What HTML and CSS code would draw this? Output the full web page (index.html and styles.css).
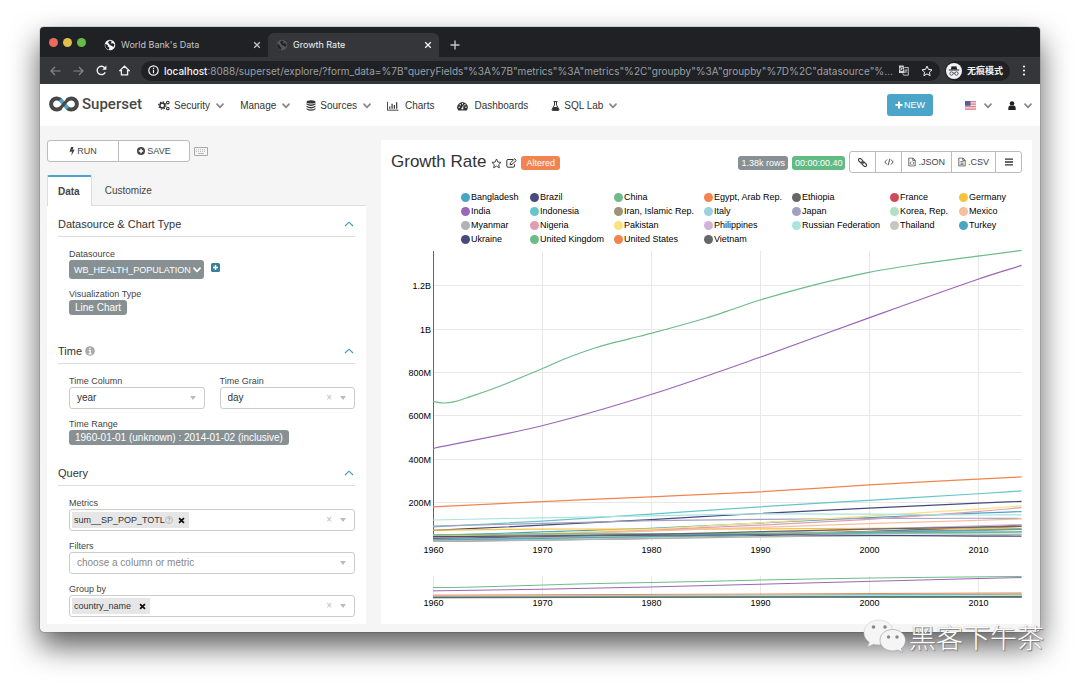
FILE: index.html
```html
<!DOCTYPE html>
<html lang="en">
<head>
<meta charset="utf-8">
<title>Growth Rate</title>
<link rel="stylesheet" href="styles.css">
</head>
<body>
<svg class="sprite" aria-hidden="true">
  <symbol id="chev" viewBox="0 0 8 6"><path d="M1 1.2 4 4.4 7 1.2" fill="none" stroke="currentColor" stroke-width="1.7" stroke-linecap="round" stroke-linejoin="round"/></symbol>
  <symbol id="up" viewBox="0 0 10 6"><path d="M1 5 5 1.2 9 5" fill="none" stroke="currentColor" stroke-width="1.1"/></symbol>
  <symbol id="x" viewBox="0 0 8 8"><path d="M1.2 1.2 6.8 6.8M6.8 1.2 1.2 6.8" fill="none" stroke="currentColor" stroke-width="1.3"/></symbol>
  <symbol id="xb" viewBox="0 0 8 8"><path d="M1.2 1.2 6.8 6.8M6.8 1.2 1.2 6.8" fill="none" stroke="currentColor" stroke-width="2"/></symbol>
  <symbol id="globe" viewBox="0 0 12 12"><circle cx="6" cy="6" r="5.3" fill="currentColor"/><path d="M1.2 4.8 4 6.2 3.6 7.6 5.4 8.4 5 10.8 3 10 1.4 8ZM6 1.6 7.6 2.6 6.8 4.4 9 4.2 10.6 5.6 9.4 8 7.6 6.8 5.8 6 5 4.4 3.8 3.6Z" fill="#202124"/></symbol>
  <symbol id="star" viewBox="0 0 12 12"><path d="M6 1.1 7.5 4.4 11 4.8 8.4 7.2 9.1 10.7 6 8.9 2.9 10.7 3.6 7.2 1 4.8 4.5 4.4Z" fill="none" stroke="currentColor" stroke-linejoin="round"/></symbol>
  <symbol id="file" viewBox="0 0 10 12"><path d="M1 1H6L9 4V11H1ZM6 1V4H9" fill="none" stroke="currentColor"/></symbol>
</svg>

<main class="window">
  <header class="tabstrip">
    <div class="lights"><i class="light red"></i><i class="light yellow"></i><i class="light green"></i></div>
    <div class="tab">
      <svg class="globe" aria-hidden="true"><use href="#globe"/></svg><span class="tab-name">World Bank's Data</span>
      <button class="bare" aria-label="Close World Bank's Data"><svg class="x"><use href="#x"/></svg></button>
    </div>
    <div class="tab current">
      <svg class="globe dim" aria-hidden="true"><use href="#globe"/></svg><span class="tab-name">Growth Rate</span>
      <button class="bare" aria-label="Close Growth Rate"><svg class="x"><use href="#x"/></svg></button>
    </div>
    <button class="bare add-tab" aria-label="New tab"><svg width="10" height="10" viewBox="0 0 10 10"><path d="M5 0.5V9.5M0.5 5H9.5" stroke="currentColor" stroke-width="1.4"/></svg></button>
  </header>

  <div class="toolbar">
    <div class="travel">
      <button class="bare faint" aria-label="Back"><svg width="11" height="10" viewBox="0 0 11 10"><path d="M5 1 1 5 5 9M1 5H10.5" fill="none" stroke="currentColor" stroke-width="1.2"/></svg></button>
      <button class="bare faint" aria-label="Forward"><svg width="11" height="10" viewBox="0 0 11 10"><path d="M6 1 10 5 6 9M10 5H.5" fill="none" stroke="currentColor" stroke-width="1.2"/></svg></button>
      <button class="bare" aria-label="Reload"><svg width="11" height="11" viewBox="0 0 11 11"><path d="M9.2 7.2A4.2 4.2 0 1 1 8.6 2.7" fill="none" stroke="currentColor" stroke-width="1.4"/><path d="M10.4.6V4.8H6.2Z" fill="currentColor"/></svg></button>
      <button class="bare" aria-label="Home"><svg width="11" height="11" viewBox="0 0 11 11"><path d="M.8 5.6 5.5 1.2 10.2 5.6H8.6V9.8H2.4V5.6Z" fill="none" stroke="currentColor" stroke-width="1.3"/></svg></button>
    </div>
    <div class="omnibox">
      <svg width="11" height="11" viewBox="0 0 11 11" aria-hidden="true"><circle cx="5.5" cy="5.5" r="4.7" fill="none" stroke="currentColor" stroke-width="1.2"/><path d="M5.5 4.8V8.2M5.5 2.7V3.9" stroke="currentColor" stroke-width="1.2"/></svg>
      <div class="address"><label class="host" for="url">localhost</label><input id="url" class="url" type="text" value=":8088/superset/explore/?form_data=%7B&quot;queryFields&quot;%3A%7B&quot;metrics&quot;%3A&quot;metrics&quot;%2C&quot;groupby&quot;%3A&quot;groupby&quot;%7D%2C&quot;datasource&quot;%3..."></div>
      <button class="bare" aria-label="Translate"><svg width="11" height="11" viewBox="0 0 11 11"><path d="M1 .5H5.6L6.8 8H1Z" fill="#d5d6d8"/><path d="M6.3 2.5H10.3V10.2H5.6L4.8 8.3" fill="none" stroke="#b8babd"/><path d="M4.9 3.1A1.6 1.6 0 1 0 5.2 4.4H3.8" fill="none" stroke="#202124" stroke-width=".9"/><path d="M6.8 5H9.8M8.3 4.2V5C8.2 6.4 7.6 7.3 6.8 8M7.3 5.8 9.4 8" fill="none" stroke="#b8babd" stroke-width=".8"/></svg></button>
      <button class="bare" aria-label="Bookmark"><svg width="12" height="12"><use href="#star"/></svg></button>
    </div>
    <div class="incognito">
      <svg width="16" height="16" viewBox="0 0 16 16" aria-hidden="true"><circle cx="8" cy="8" r="8" fill="#f1f3f4"/><path d="M4.8 6.2 5.6 3.2 7 3.6 8 3.3 9 3.6 10.4 3.2 11.2 6.2ZM2.8 6.6H13.2V7.4H2.8Z" fill="#202124"/><g fill="none" stroke="#202124" stroke-width=".7"><circle cx="5.5" cy="10.5" r="1.7"/><circle cx="10.5" cy="10.5" r="1.7"/><path d="M7.2 10.200Q8 9.700 8.800 10.200"/></g></svg>
      <span>无痕模式</span>
    </div>
    <button class="bare kebab" aria-label="Menu"><svg width="4" height="11" viewBox="0 0 4 11" fill="currentColor"><circle cx="2" cy="1.5" r="1.1"/><circle cx="2" cy="5.5" r="1.1"/><circle cx="2" cy="9.5" r="1.1"/></svg></button>
  </div>

  <nav class="nav">
    <a class="brand" href="#">
      <svg width="30" height="16" viewBox="0 0 30 16" aria-hidden="true"><g fill="none" stroke-width="4"><path d="M11.800 11.800A5.600 5.600 0 1 1 11.800 4.200" stroke="#484848"/><path d="M18.200 4.200A5.600 5.600 0 1 1 18.200 11.800" stroke="#484848"/><path d="M11.200 3.600 18.800 12.400" stroke="#4aa5c9"/><path d="M18.900 3.500 11.100 12.500" stroke="#484848" stroke-width="3.400"/></g></svg>
      <span>Superset</span>
    </a>
    <a class="item" href="#"><svg width="12" height="11" viewBox="0 0 12 11" aria-hidden="true"><g fill="none" stroke="#333"><circle cx="4.300" cy="5.500" r="2.400" stroke-width="1.500"/><circle cx="4.300" cy="5.500" r="3.600" stroke-width="1.200" stroke-dasharray="1.400 1.427"/><circle cx="9.800" cy="2.600" r="1.300" stroke-width="1.100"/><circle cx="9.800" cy="8.500" r="1.300" stroke-width="1.100"/></g></svg><span>Security</span><svg class="chev"><use href="#chev"/></svg></a>
    <a class="item" href="#"><span>Manage</span><svg class="chev"><use href="#chev"/></svg></a>
    <a class="item" href="#"><svg width="10" height="11" viewBox="0 0 10 11" fill="#333" aria-hidden="true"><ellipse cx="5" cy="1.900" rx="4.500" ry="1.700"/><path d="M.5 3.200Q5 5.800 9.500 3.200V4.600Q5 7.200.5 4.600ZM.5 5.700Q5 8.300 9.500 5.700V7.100Q5 9.700.5 7.100ZM.5 8.200Q5 10.800 9.500 8.200V9.200Q5 12.200.5 9.200Z"/></svg><span>Sources</span><svg class="chev"><use href="#chev"/></svg></a>
    <a class="item plain" href="#"><svg width="12" height="10" viewBox="0 0 13 10" aria-hidden="true"><path d="M.5.5V9.500H12.500" fill="none" stroke="#333"/><path d="M3 8V5.500M5.500 8V2.500M8 8V4M10.500 8V1" stroke="#333" stroke-width="1.300"/></svg><span>Charts</span></a>
    <a class="item plain" href="#"><svg width="11" height="10" viewBox="0 0 11 10" aria-hidden="true"><path d="M1.300 9.500A5.200 5.200 0 1 1 9.700 9.500Z" fill="#333"/><g fill="#fff"><circle cx="2.200" cy="6.200" r=".7"/><circle cx="3.200" cy="3.700" r=".7"/><circle cx="5.500" cy="2.700" r=".7"/><circle cx="7.900" cy="3.700" r=".7"/><circle cx="8.900" cy="6.200" r=".7"/><circle cx="5.400" cy="7.600" r="1"/></g><path d="M5.400 7.600 6.300 4.400" stroke="#fff" stroke-width=".8"/></svg><span>Dashboards</span></a>
    <a class="item" href="#"><svg width="9" height="10" viewBox="0 0 9 10" aria-hidden="true"><path d="M2.500.6H6.500M3.500.6V4L1 8.500Q.7 9.400 1.600 9.400H7.400Q8.300 9.400 8 8.500L5.500 4V.6" fill="none" stroke="#333"/><path d="M2.600 6H6.400L8 9H1Z" fill="#333"/></svg><span>SQL Lab</span><svg class="chev"><use href="#chev"/></svg></a>
    <button class="new"><svg width="8" height="8" viewBox="0 0 8 8" aria-hidden="true"><path d="M4 .5V7.500M.5 4H7.500" stroke="#fff" stroke-width="2"/></svg>NEW</button>
    <a class="item lang" href="#" aria-label="Language"><svg width="11" height="9" viewBox="0 0 11 9"><path fill="#f3dfe2" d="M0 0H11V9H0Z"/><path d="M0 .7H11M0 3.200H11M0 5.700H11M0 8.200H11" stroke="#dd808a" stroke-width="1.200"/><path fill="#5360a0" d="M0 0H5.500V4.800H0Z"/></svg><svg class="chev"><use href="#chev"/></svg></a>
    <a class="item user" href="#" aria-label="User"><svg width="8" height="9" viewBox="0 0 8 9" fill="#222"><circle cx="4" cy="2.500" r="2.300"/><path d="M.3 9V7Q.3 4.600 2.300 4.400Q4 5.800 5.700 4.400Q7.700 4.600 7.700 7V9Z"/></svg><svg class="chev"><use href="#chev"/></svg></a>
  </nav>

  <div class="workspace">
    <section class="controls">
      <div class="actions">
        <div class="group">
          <button><svg width="6" height="9" viewBox="0 0 6 9" aria-hidden="true"><path d="M2 0H4.600L3.600 2.800 5.800 2.400 2.300 9 3 4.600.5 5.100Z" fill="currentColor"/></svg>RUN</button>
          <button><svg width="8" height="8" viewBox="0 0 8 8" aria-hidden="true"><circle cx="4" cy="4" r="4" fill="currentColor"/><path d="M4 1.800V6.200M1.800 4H6.200" stroke="#fff" stroke-width="1.400"/></svg>SAVE</button>
        </div>
        <button class="bare" aria-label="Keyboard shortcuts"><svg width="14" height="9" viewBox="0 0 14 9"><path d="M.5.500H13.500V8.500H.5Z" fill="none" stroke="#aaa"/><path d="M2 2.700H12M2 4.500H12" stroke="#bbb" stroke-dasharray="1 1"/><path d="M4 6.500H10" stroke="#bbb"/></svg></button>
      </div>
      <div class="subtabs" role="tablist">
        <button class="subtab on" role="tab" aria-selected="true">Data</button>
        <button class="subtab" role="tab" aria-selected="false">Customize</button>
      </div>
      <div class="panel">
        <section class="block">
          <h2>Datasource &amp; Chart Type<svg class="up"><use href="#up"/></svg></h2>
          <div class="fields">
            <div class="field"><span class="label" id="l-ds">Datasource</span>
              <div class="row"><button class="chip tall" aria-describedby="l-ds">WB_HEALTH_POPULATION<svg class="chev"><use href="#chev"/></svg></button><button class="bare plus" aria-label="Expand datasource"><svg width="9" height="9" viewBox="0 0 9 9"><rect width="9" height="9" rx="1.500" fill="#3a809d"/><path d="M4.500 2V7M2 4.500H7" stroke="#fff" stroke-width="1.500"/></svg></button></div></div>
            <div class="field"><span class="label">Visualization Type</span><button class="chip">Line Chart</button></div>
          </div>
        </section>
        <section class="block second">
          <h2><span>Time <svg class="info" width="10" height="10" viewBox="0 0 10 10" aria-hidden="true"><circle cx="5" cy="5" r="4.800" fill="#aaa"/><path d="M5 1.700V3.100M3.800 4.400H5.200V7.600M3.600 7.800H6.600" fill="none" stroke="#fff" stroke-width="1.300"/></svg></span><svg class="up"><use href="#up"/></svg></h2>
          <div class="fields">
            <div class="pair">
              <div class="field"><label class="label" for="col">Time Column</label><div class="box"><select id="col"><option>year</option></select><i class="caret"></i></div></div>
              <div class="field"><label class="label" for="grain">Time Grain</label><div class="box"><select id="grain"><option>day</option></select><button class="bare clear" aria-label="Clear">×</button><i class="caret"></i></div></div>
            </div>
            <div class="field"><span class="label">Time Range</span><button class="chip">1960-01-01 (unknown) : 2014-01-02 (inclusive)</button></div>
          </div>
        </section>
        <section class="block">
          <h2>Query<svg class="up"><use href="#up"/></svg></h2>
          <div class="fields">
            <div class="field"><label class="label" for="metrics">Metrics</label><div class="box tags"><span class="tag">sum__SP_POP_TOTL<svg width="8" height="8" viewBox="0 0 8 8" aria-hidden="true"><circle cx="4" cy="4" r="3.500" fill="none" stroke="#aaa" stroke-width=".7"/><path d="M2.900 3.200Q3 2 4 2T5.100 3.100Q5.100 3.700 4 4.200V4.800M4 5.500V6.300" fill="none" stroke="#999" stroke-width=".8"/></svg><button class="bare drop" aria-label="Remove sum__SP_POP_TOTL"><svg class="cross"><use href="#xb"/></svg></button></span><input id="metrics" type="text"><button class="bare clear" aria-label="Clear">×</button><i class="caret"></i></div></div>
            <div class="field"><label class="label" for="filters">Filters</label><div class="box"><select id="filters" class="empty"><option>choose a column or metric</option></select><i class="caret"></i></div></div>
            <div class="field"><label class="label" for="group">Group by</label><div class="box tags"><span class="tag wide">country_name<button class="bare drop" aria-label="Remove country_name"><svg class="cross"><use href="#xb"/></svg></button></span><input id="group" type="text"><button class="bare clear" aria-label="Clear">×</button><i class="caret"></i></div></div>
          </div>
        </section>
      </div>
    </section>

    <section class="card">
      <div class="card-head">
        <h1>Growth Rate</h1>
        <button class="bare" aria-label="Favorite"><svg width="11" height="11"><use href="#star"/></svg></button>
        <button class="bare" aria-label="Edit"><svg width="11" height="10" viewBox="0 0 11 10"><path d="M7 1.500H2Q.8 1.500.8 2.700V8Q.8 9.200 2 9.200H7.300Q8.500 9.200 8.500 8V6.300" fill="none" stroke="currentColor"/><path d="M4 6.800 4.500 4.800 8.700.8 10.300 2.400 6 6.400Z" fill="none" stroke="currentColor"/></svg></button>
        <span class="altered">Altered</span>
        <span class="stat rows">1.38k rows</span>
        <span class="stat time">00:00:00.40</span>
        <div class="group">
          <button aria-label="Copy link"><svg width="9" height="9" viewBox="0 0 9 9"><g transform="rotate(45 4.500 4.500)" fill="none" stroke="currentColor" stroke-width="1.200"><rect x="-.6" y="3" width="5" height="3" rx="1.400"/><rect x="4.600" y="3" width="5" height="3" rx="1.400"/><path d="M3 4.500H6"/></g></svg></button>
          <button aria-label="Embed code"><svg width="10" height="8" viewBox="0 0 10 8"><path d="M3 1.500.8 4 3 6.500M7 1.500 9.200 4 7 6.500M5.800.8 4.200 7.200" fill="none" stroke="currentColor" stroke-width=".9"/></svg></button>
          <button><svg width="8" height="10" viewBox="0 0 10 12" aria-hidden="true"><use href="#file" width="10" height="12"/><path d="M4 5.500 2.800 7.500 4 9.500M6 5.500 7.200 7.500 6 9.500" fill="none" stroke="currentColor" stroke-width=".9"/></svg>.JSON</button>
          <button><svg width="8" height="10" viewBox="0 0 10 12" aria-hidden="true"><use href="#file" width="10" height="12"/><path d="M3 5.500H7M3 7.500H7M3 9.300H7" stroke="currentColor" stroke-width=".9"/></svg>.CSV</button>
          <button aria-label="More"><svg width="8" height="8" viewBox="0 0 8 8"><path d="M0 1.200H8M0 4H8M0 6.800H8" stroke="#333" stroke-width="1.300"/></svg></button>
        </div>
      </div>
      <ul class="legend" id="legend"></ul>
      <svg class="chart" id="chart" viewBox="0 0 631 370" role="img" aria-label="Population by country, 1960 to 2014"></svg>
    </section>
  </div>
</main>

<div class="watermark">
  <svg width="44" height="36" viewBox="0 0 44 36" aria-hidden="true"><g fill="#f5f5f5" stroke="#999" stroke-width=".6"><path stroke="#ccc" d="M16 1C7.500 1 1 6.500 1 13.400 1 17.400 3 20.800 6.500 23.200L5 27.500 10.500 25Q13 25.900 17 25.800L30 12Q28 1 16 1Z"/><path d="M29.500 10.500C22.500 10.500 17 15.300 17 21.200S22.500 32 29.500 32Q32.500 32 35 31L39.500 33.500 38.200 29.600C41 27.600 42.500 24.600 42.500 21.200 42.500 15.300 36.800 10.500 29.500 10.500Z"/></g><g fill="#888"><circle cx="10.500" cy="8" r="1.800"/><circle cx="22" cy="8" r="1.800"/><circle cx="25.500" cy="18" r="1.700"/><circle cx="34" cy="18" r="1.700"/></g></svg>
  <span>黑客下午茶</span>
</div>
<script src="chart.js"></script>
</body>
</html>
```
FILE: styles.css
```css
* { box-sizing: border-box; }
body {
  margin: 0;
  min-height: 100vh;
  padding: 27px 40px 53px;
  background: #fff;
  color: #333;
  font: 10px/12px "Liberation Sans", Arial, sans-serif;
  position: relative;
}
svg { display: block; flex: none; }
button, input, select { font: inherit; color: inherit; margin: 0; min-width: 0; }
.sprite { position: absolute; width: 0; height: 0; }
.bare { padding: 0; border: 0; background: none; display: flex; flex: none; }
a { color: inherit; text-decoration: none; }

.window {
  border-radius: 4px;
  overflow: hidden;
  background: #f5f5f5;
  box-shadow: 0 14px 30px rgba(0, 0, 0, .65), 0 0 1px #000;
}

/* browser chrome */
.tabstrip { display: flex; height: 30px; padding-top: 6px; background: #202124; color: #c3c5c8; font: 9px/12px Inter, "Noto Sans", sans-serif; }
.lights { display: flex; gap: 5px; padding: 5px 0 0 9px; width: 53px; }
.light { width: 9px; height: 9px; border-radius: 50%; }
.red { background: #ed6a5e; }
.yellow { background: #e0bf4b; }
.green { background: #68bb49; }
.tab { display: flex; align-items: center; width: 171px; padding: 0 7px 0 8px; border-radius: 6px 6px 0 0; }
.tab:not(.current) { margin-left: 3px; width: 172px; }
.current { background: #35363a; color: #f1f3f4; }
.tab-name { flex: 1; padding-left: 5px; }
.globe { width: 12px; height: 12px; color: #f1f3f4; }
.dim { color: #55575b; }
.x { width: 8px; height: 8px; }
.add-tab { align-items: center; padding-left: 11px; }

.toolbar { display: flex; align-items: center; height: 27px; padding: 0 14px 0 10px; background: #35363a; color: #f1f3f4; }
.travel { display: flex; gap: 12px; align-items: center; width: 91px; }
.faint { color: #85878b; }
.omnibox { display: flex; flex: 1; align-items: center; min-width: 0; height: 20px; padding: 0 7px; border-radius: 10px; background: #202124; gap: 12px; font: 10px/14px Inter, "Noto Sans", sans-serif; }
.address { display: flex; flex: 1; align-items: center; min-width: 0; margin: 0 -10px 0 -7px; }
.host { font-weight: 500; color: #f1f3f4; }
.url { flex: 1; width: 100%; padding: 0; border: 0; background: none; color: #9aa0a6; text-overflow: ellipsis; outline: 0; }
.incognito { display: flex; align-items: center; gap: 5px; height: 20px; margin-left: 5px; padding: 0 7px 0 1px; border-radius: 10px; background: #202124; font: 700 9px/14px "Noto Sans CJK SC", sans-serif; }
.kebab { margin-left: 12px; }

/* application navigation */
.nav { display: flex; align-items: center; height: 42px; padding: 0 8px 0 9px; background: #fff; }
.brand { display: flex; align-items: center; gap: 3px; width: 109px; padding-bottom: 3px; color: #484848; font: 500 15px/18px Roboto, sans-serif; }
.item { display: flex; align-items: center; gap: 4px; margin-right: 16px; padding-top: 1px; white-space: nowrap; }
.plain { gap: 6px; margin-right: 23px; }
.chev { width: 8px; height: 6px; color: #888; margin-left: 2px; }
.new { display: flex; align-items: center; gap: 1px; height: 22px; margin-left: auto; padding: 0 8px; border: 0; border-radius: 3px; background: #4aa5c9; color: #fff; font-size: 9px; }
.lang { margin: 0 16px 0 32px; gap: 6px; }
.user { margin: 0; gap: 6px; }

/* explore view */
.workspace { display: grid; grid-template-columns: minmax(0, 319fr) minmax(0, 651fr); gap: 15px; padding: 14px 8px 8px 7px; }
.actions { display: flex; align-items: center; gap: 4px; }
.group { display: flex; }
.group button { display: flex; align-items: center; justify-content: center; gap: 2px; height: 22px; padding: 0 6px; border: 1px solid #bbb; margin-left: -1px; background: #fff; color: #444; font-size: 9px; }
.group button:first-child { border-radius: 3px 0 0 3px; margin-left: 0; }
.group button:last-child { border-radius: 0 3px 3px 0; }
.actions .group button { width: 72px; }
.subtabs { display: flex; margin-top: 13px; height: 31px; border-bottom: 1px solid #ddd; }
.subtab { height: 31px; padding: 0 13px; border: 0; background: none; color: #444; }
.on { padding: 0 11px 0 10px; border: solid #ddd; border-width: 0 1px; border-top: 2px solid #4aa5c9; border-radius: 2px 2px 0 0; background: #fff; font-weight: 700; }
.panel { padding: 6px 11px 7px; background: #fff; }
.block + .block { margin-top: 16px; }
.block.second { margin-top: 24px; }
h2 { display: flex; align-items: center; justify-content: space-between; margin: 0 0 11px; height: 25px; border-bottom: 1px solid #ddd; font-size: 11px; line-height: 24px; font-weight: 400; }
.info { display: inline-block; vertical-align: -1px; }
.up { width: 10px; height: 6px; margin-right: 1px; color: #3a9bb5; }
.fields { display: grid; gap: 9px; padding-left: 11px; }
.label { display: block; font-size: 9px; line-height: 12px; color: #444; }
.row { display: flex; gap: 7px; align-items: center; }
.plus { padding-bottom: 4px; }
.chip { display: flex; align-items: center; height: 15px; padding: 0 6px; border: 0; border-radius: 3px; background: #879194; color: #fff; }
.tall { height: 19px; padding: 0 3px 0 5px; font-size: 9px; }
.tall .chev { color: #fff; }
.pair { display: grid; grid-template-columns: 1fr 1fr; gap: 15px; }
.box { display: flex; align-items: center; height: 22px; padding: 0 8px 0 7px; border: 1px solid #ccc; border-radius: 3px; background: #fff; }
.box select, .box input { flex: 1; width: 100%; padding: 0; border: 0; background: none; appearance: none; outline: 0; }
.box .empty { color: #888; }
.caret { border: 3px solid transparent; border-top: 4px solid #bbb; border-bottom: 0; }
.clear { padding-right: 8px; color: #bbb; }
.box.tags { padding-left: 2px; }
.tag { display: flex; align-items: center; flex: none; height: 16px; padding: 0 4px 0 2px; background: #e6e6e6; font-size: 9px; }
.drop { margin-left: 5px; }
.wide .drop { margin-left: 8px; }
.cross { width: 7px; height: 7px; color: #111; }

/* chart card */
.card { padding: 11px 10px 8px; background: #fff; }
.card-head { display: flex; align-items: center; height: 22px; gap: 4px; }
.card-head > .bare, .altered, .stat { margin-top: 2px; }
h1 { margin: 0 1px 0 0; font-size: 17px; line-height: 22px; font-weight: 400; white-space: nowrap; }
.altered, .stat { padding: 0 5px; border-radius: 3px; color: #fff; font-size: 9px; line-height: 14px; white-space: nowrap; }
.altered { background: #f2844f; }
.rows { margin-left: auto; background: #879194; }
.stat { padding: 0 3px; }
.time { background: #62bb85; }
.card-head .group button { min-width: 27px; }
.legend { display: grid; grid-template-columns: 69px 84px 90px 88px 98px 69px 63px; justify-content: end; margin: 17px 0 0; padding: 0; list-style: none; color: #000; font-size: 9px; line-height: 14px; white-space: nowrap; }
.legend li { display: flex; align-items: center; gap: 1px; }
.swatch { width: 9px; height: 9px; border-radius: 50%; }
.chart { width: 100%; height: auto; }
.chart text { font-size: 9px; fill: #000; }
.grid { stroke: #e8e8e8; fill: none; }
.axis { stroke: #666; fill: none; }
.series { fill: none; stroke-width: 1.2; }
.mini { stroke-width: 1; }

.watermark { position: absolute; right: 36px; bottom: 30px; display: flex; align-items: center; gap: 2px; color: #fff; font: 300 27px/34px "Noto Sans CJK SC", sans-serif; text-shadow: 1px 1px 1px #777, 0 0 1px #999; white-space: nowrap; }
```
FILE: chart.js
```js
// Population in millions at these years, unless a series gives its own [year, value] pairs.
const years = [1960, 1970, 1980, 1990, 2000, 2010, 2014];
const china = [[1960, 667], [1961, 660], [1962, 666], [1963, 682], [1966, 735], [1970, 818], [1972, 862], [1975, 916], [1978, 956], [1980, 981], [1985, 1051], [1987, 1084], [1990, 1135], [1995, 1205], [2000, 1263], [2005, 1304], [2010, 1338], [2014, 1364]];
const series = [
  ["Bangladesh", "#4aa5c4", [48, 65, 81, 106, 131, 152, 159]],
  ["Brazil", "#474a7c", [72, 96, 122, 150, 175, 198, 206]],
  ["China", "#6dbb8b", china],
  ["Egypt, Arab Rep.", "#f2844f", [27, 35, 43, 56, 68, 82, 90]],
  ["Ethiopia", "#666666", [22, 28, 35, 48, 66, 87, 97]],
  ["France", "#cc4b58", [47, 52, 55, 58, 61, 65, 66]],
  ["Germany", "#f8c33c", [73, 78, 78, 79, 82, 82, 81]],
  ["India", "#9b66b5", [450, 555, 699, 871, 1053, 1231, 1295]],
  ["Indonesia", "#66c5cb", [88, 115, 147, 181, 211, 241, 254]],
  ["Iran, Islamic Rep.", "#9c9379", [22, 29, 39, 56, 66, 74, 78]],
  ["Italy", "#9ccfe0", [50, 54, 56, 57, 57, 59, 61]],
  ["Japan", "#a39fc0", [92, 104, 117, 123, 127, 128, 127]],
  ["Korea, Rep.", "#b3dfc7", [25, 32, 38, 43, 47, 49, 50]],
  ["Mexico", "#f5bf9e", [38, 52, 69, 86, 103, 118, 125]],
  ["Myanmar", "#b2b2b2", [21, 27, 34, 42, 48, 52, 53]],
  ["Nigeria", "#e09eb4", [45, 56, 74, 96, 123, 159, 177]],
  ["Pakistan", "#fbe180", [45, 58, 78, 107, 138, 170, 185]],
  ["Philippines", "#cfb3d8", [26, 36, 47, 62, 78, 93, 99]],
  ["Russian Federation", "#aae3e0", [120, 130, 139, 148, 147, 143, 144]],
  ["Thailand", "#c9c6c2", [27, 37, 47, 57, 63, 67, 68]],
  ["Turkey", "#4aa5c4", [28, 35, 44, 54, 63, 72, 77]],
  ["Ukraine", "#474a7c", [43, 47, 50, 52, 49, 46, 45]],
  ["United Kingdom", "#6dbb8b", [52, 56, 56, 57, 59, 63, 65]],
  ["United States", "#f2844f", [181, 205, 227, 250, 282, 309, 319]],
  ["Vietnam", "#666666", [35, 43, 54, 66, 78, 87, 91]]
];

document.getElementById("legend").innerHTML = series
  .map(([name, color]) => `<li><i class="swatch" style="background:${color}"></i>${name}</li>`)
  .join("");

const x = year => 42 + (year - 1960) * 10.9;
const yMain = value => 300 - value * 0.2167;
const yMini = value => 352 - value * 0.0158;

function curve(points, y) {
  const p = points.map(([year, value]) => [x(year), y(value)]);
  const slope = p.map((_, i) => {
    const a = p[Math.max(i - 1, 0)], b = p[Math.min(i + 1, p.length - 1)];
    return (b[1] - a[1]) / (b[0] - a[0]);
  });
  let d = `M${p[0]}`;
  for (let i = 1; i < p.length; i++) {
    const step = (p[i][0] - p[i - 1][0]) / 3;
    d += `C${p[i - 1][0] + step},${p[i - 1][1] + slope[i - 1] * step} ${p[i][0] - step},${p[i][1] - slope[i] * step} ${p[i]}`;
  }
  return d;
}

let out = "";
for (const [value, name] of [[200, "200M"], [400, "400M"], [600, "600M"], [800, "800M"], [1000, "1B"], [1200, "1.2B"]]) {
  const y = Math.floor(yMain(value)) + 0.5;
  out += `<path class="grid" d="M42 ${y}H631"/><text x="40" y="${y + 3}" text-anchor="end">${name}</text>`;
}
for (const year of years.slice(0, 6)) {
  const at = Math.round(x(year)) + 0.5;
  out += `<path class="grid" d="M${at} 5V295M${at} 330V352"/>`;
  out += `<text x="${at}" y="307" text-anchor="middle">${year}</text><text x="${at}" y="360" text-anchor="middle">${year}</text>`;
}
out += `<path class="axis" d="M42.5 5V295"/>`;
for (const [, color, values] of series) {
  const points = Array.isArray(values[0]) ? values : values.map((v, i) => [years[i], v]);
  out += `<path class="series" stroke="${color}" d="${curve(points, yMain)}"/>`;
  out += `<path class="series mini" stroke="${color}" d="${curve(points, yMini)}"/>`;
}
document.getElementById("chart").innerHTML = out;
```
